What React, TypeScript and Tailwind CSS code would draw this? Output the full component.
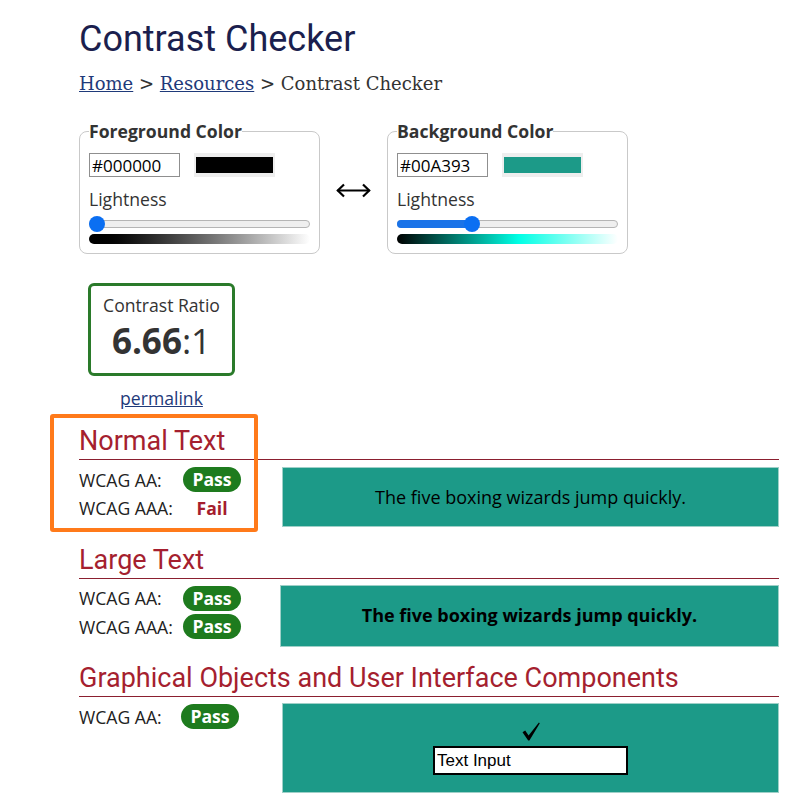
import React from "react";

const sans = "font-['Open_Sans',sans-serif]";
const roboto = "font-['Roboto',sans-serif]";

function Slider({ pos, filled }: { pos: number; filled?: boolean }) {
  // pos = 0..1 along the track
  const left = `calc(${pos} * (100% - 16px))`;
  return (
    <div className="relative h-[16px] w-full">
      <div className="absolute left-0 right-0 top-[4px] h-[8px] rounded-full border border-[#b5b5b5] bg-[#efefef]" />
      {filled && (
        <div
          className="absolute left-0 top-[4px] h-[8px] rounded-l-full bg-[#1a73e8]"
          style={{ width: `calc(${pos} * (100% - 16px) + 8px)` }}
        />
      )}
      <div className="absolute top-0 h-[16px] w-[16px] rounded-full bg-[#0b6ff2]" style={{ left }} />
    </div>
  );
}

function ColorField({
  label,
  hex,
  swatch,
  gradient,
  pos,
  filled,
}: {
  label: string;
  hex: string;
  swatch: string;
  gradient: string;
  pos: number;
  filled?: boolean;
}) {
  return (
    <fieldset className="w-[241px] rounded-[8px] border border-[#c9c9c9] px-[9px] pb-[9px]">
      <legend className="text-[17.6px] font-bold leading-[22px] text-[#333]">{label}</legend>
      <div className="mt-[11px] flex items-center gap-[14px]">
        <input
          readOnly
          defaultValue={hex}
          className={`${sans} h-[24px] w-[91px] border border-[#8f8f8f] px-[2px] text-[17px] leading-[22px] text-black outline-none`}
        />
        <div className="h-[24px] w-[81px] bg-[#eeeeee] px-[2px] py-[4px]">
          <div className={`h-full w-full ${swatch}`} />
        </div>
      </div>
      <div className="mt-[10px] text-[17.6px] leading-[24px] text-[#333]">Lightness</div>
      <div className="mt-[5px]">
        <Slider pos={pos} filled={filled} />
      </div>
      <div className={`mt-[2px] h-[10px] rounded-[5px] ${gradient}`} />
    </fieldset>
  );
}

function Badge({ pass }: { pass: boolean }) {
  if (!pass) {
    return <span className="text-[17.6px] font-bold leading-[25px] text-[#a51d2d]">Fail</span>;
  }
  return (
    <span className="inline-flex h-[25px] items-center rounded-full bg-[#1e7b1e] px-[9px] text-[17.6px] font-bold text-white">
      Pass
    </span>
  );
}

function Results({ rows, labelW = "w-[104px]" }: { rows: [string, boolean][]; labelW?: string }) {
  return (
    <div className="flex w-[203px] shrink-0 flex-col gap-[3.5px]">
      {rows.map(([label, pass]) => (
        <div key={label} className="flex h-[25px] items-center">
          <span className={`${labelW} text-[17.6px] leading-[24px] text-[#222]`}>{label}</span>
          <span className="flex w-[58px] justify-center">
            <Badge pass={pass} />
          </span>
        </div>
      ))}
    </div>
  );
}

function Heading({ children }: { children: React.ReactNode }) {
  return (
    <h2 className={`${roboto} border-b border-[#8b1f2f] pb-[2px] text-[27px] leading-[31px] text-[#a51f2f]`}>
      {children}
    </h2>
  );
}

export default function App() {
  return (
    <div className={`${sans} min-h-screen bg-white pl-[79px] pt-[18px]`}>
      <div className="w-[700px]">
        <h1 className={`${roboto} text-[36px] leading-[42px] text-[#1b1f4e]`}>Contrast Checker</h1>

        <nav className="mt-[12px] font-['DejaVu_Serif',serif] text-[18px] leading-[24px] text-[#333]">
          <a className="text-[#1f3a7a] underline">Home</a> &gt;{" "}
          <a className="text-[#1f3a7a] underline">Resources</a> &gt; Contrast Checker
        </nav>

        <div className="mt-[24px] flex items-start">
          <ColorField
            label="Foreground Color"
            hex="#000000"
            swatch="bg-black"
            gradient="bg-gradient-to-r from-black to-white"
            pos={0}
          />
          <div className="mx-[16px] mt-[63px] w-[35px]">
            <svg width="35" height="15" viewBox="0 0 35 15" fill="none" stroke="black" strokeWidth="2.2">
              <path d="M1.5 7.5 H33.5" />
              <path d="M8 1.5 L1.8 7.5 L8 13.5" />
              <path d="M27 1.5 L33.2 7.5 L27 13.5" />
            </svg>
          </div>
          <ColorField
            label="Background Color"
            hex="#00A393"
            swatch="bg-[#1c9a88]"
            gradient="bg-[linear-gradient(to_right,#000_0%,#00ffe5_55%,#ffffff_100%)]"
            pos={0.325}
            filled
          />
        </div>

        <div className="ml-[9px] mt-[29px] flex w-[147px] flex-col items-center">
          <div className="flex h-[93px] w-[147px] flex-col items-center rounded-[6px] border-[3px] border-[#2a7a2a] pt-[8px]">
            <div className="text-[17.6px] leading-[22px] text-[#333]">Contrast Ratio</div>
            <div className="mt-[5px] text-[35px] leading-[40px] text-[#333]">
              <span className="font-bold">6.66</span>:1
            </div>
          </div>
          <a className="mt-[10px] text-[17.6px] leading-[24px] text-[#1f3a7a] underline">permalink</a>
        </div>

        <section className="relative mt-[16px]">
          <div className="pointer-events-none absolute -left-[29px] -top-[12.5px] h-[118px] w-[208px] rounded-[3px] border-[4px] border-[#ff7a1a]" />
          <Heading>Normal Text</Heading>
          <div className="mt-[7px] flex">
            <Results
              rows={[
                ["WCAG AA:", true],
                ["WCAG AAA:", false],
              ]}
            />
            <div className="flex h-[60px] flex-1 items-center justify-center border border-[#9fd0c8] bg-[#1c9a88] text-[18px] text-black">
              The five boxing wizards jump quickly.
            </div>
          </div>
        </section>

        <section className="mt-[17.5px]">
          <Heading>Large Text</Heading>
          <div className="mt-[6px] flex">
            <div className="pt-[1px]">
              <Results
                rows={[
                  ["WCAG AA:", true],
                  ["WCAG AAA:", true],
                ]}
              />
            </div>
            <div className="ml-[-2px] flex h-[62px] flex-1 items-center justify-center border border-[#9fd0c8] bg-[#1c9a88] text-[18px] font-bold text-black">
              The five boxing wizards jump quickly.
            </div>
          </div>
        </section>

        <section className="mt-[16.5px]">
          <Heading>Graphical Objects and User Interface Components</Heading>
          <div className="mt-[6px] flex">
            <div className="pt-[1px]">
              <Results rows={[["WCAG AA:", true]]} labelW="w-[102px]" />
            </div>
            <div className="flex h-[90px] flex-1 flex-col items-center border border-[#9fd0c8] bg-[#1c9a88] pt-[18px]">
              <svg width="18" height="19" viewBox="0 0 18 19">
                <path d="M0.5 10.2 L3.2 8.6 L6.6 13.4 L16.9 0.6 L17.8 1.3 L7.4 18.4 L6.2 18.4 Z" fill="black" />
              </svg>
              <input
                readOnly
                defaultValue="Text Input"
                className="mt-[5px] h-[29px] w-[195px] border-2 border-black bg-white px-[2px] font-['Liberation_Sans',Arial,sans-serif] text-[17px] text-black outline-none"
              />
            </div>
          </div>
        </section>
      </div>
    </div>
  );
}
